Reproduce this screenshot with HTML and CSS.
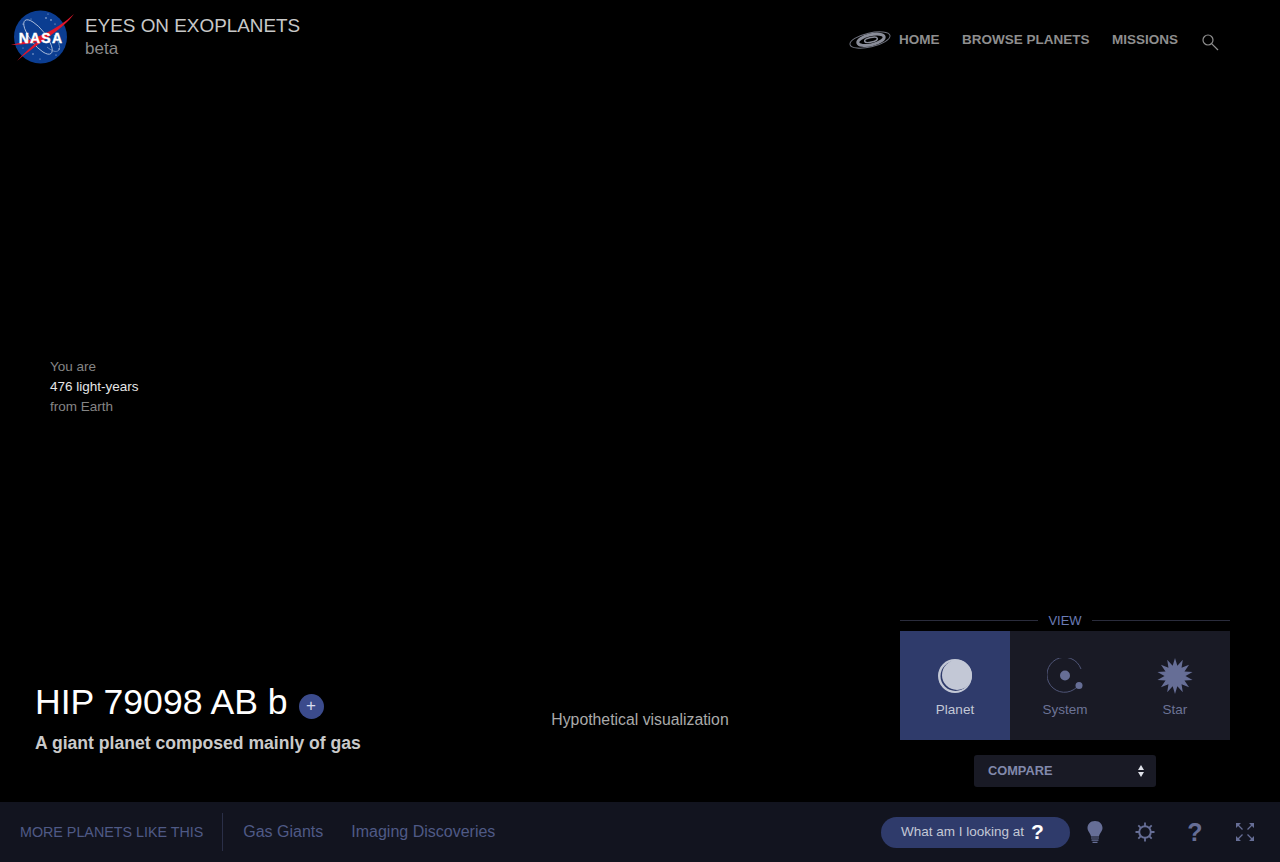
FILE: index.html
```html
<!DOCTYPE html>
<html lang="en">
<head>
<meta charset="utf-8">
<title>Eyes on Exoplanets</title>
<link rel="stylesheet" href="styles.css">
</head>
<body>
<div class="app">
  <header class="top">
    <div class="brand">
      <svg class="nasa" width="70" height="60" viewBox="0 0 70 60" aria-label="NASA">
        <circle cx="31.500" cy="30" r="26.500" fill="#0b3d91"/>
        <g fill="#b9cbe8"><circle cx="37" cy="11" r=".8"/><circle cx="42" cy="13" r=".8"/><circle cx="46" cy="17" r=".6"/><circle cx="14" cy="17" r=".6"/><circle cx="22" cy="12" r=".5"/><circle cx="50" cy="42" r=".7"/><circle cx="47" cy="48" r=".6"/><circle cx="24" cy="47" r=".7"/><circle cx="31" cy="52" r=".6"/><circle cx="14" cy="41" r=".5"/><circle cx="39" cy="7" r=".5"/></g>
        <ellipse cx="29" cy="30" rx="21" ry="7.500" transform="rotate(52 29 30)" fill="none" stroke="#c3d0e6" stroke-width=".8"/>
        <path d="M38 40 C43 44 47 46 50 43 C52 41 49 33 45 28" fill="none" stroke="#8fa6cc" stroke-width=".7"/>
        <path d="M1.700 38 C24 33 47 24 65 7 C54 22 36 31 8 54 C15 46 22 40 28 35 C19 37 10 38 1.700 38 Z" fill="#e0162b"/>
        <text class="nasa-word" x="32" y="36" text-anchor="middle">NASA</text>
      </svg>
      <div class="brand-text">
        <div class="brand-title">EYES ON EXOPLANETS</div>
        <div class="brand-sub">beta</div>
      </div>
    </div>
    <nav class="nav">
      <svg class="galaxy" width="44" height="24" viewBox="0 0 44 24">
        <g transform="rotate(-13 22 12)" fill="none">
          <ellipse cx="22" cy="12" rx="20.500" ry="7" stroke="#6f727e" stroke-width="1"/>
          <ellipse cx="23" cy="12" rx="13.500" ry="5" stroke="#8a8d99" stroke-width="3"/>
          <ellipse cx="23" cy="12" rx="6.500" ry="2.300" stroke="#8a8d99" stroke-width="1.500"/>
        </g>
      </svg>
      <a class="nav-link first">HOME</a>
      <a class="nav-link">BROWSE PLANETS</a>
      <a class="nav-link">MISSIONS</a>
      <svg class="search" width="18" height="18" viewBox="0 0 18 18" fill="none" stroke="#8f8f8f" stroke-width="1.200">
        <circle cx="7" cy="7" r="5"/><path d="M10.600 10.600 L17 17"/>
      </svg>
    </nav>
  </header>

  <main class="stage">
    <div class="distance">
      <div>You are</div>
      <div class="distance-value">476 light-years</div>
      <div>from Earth</div>
    </div>
    <div class="lower">
      <div class="planet">
        <h1 class="planet-name">HIP 79098 AB b<span class="plus">+</span></h1>
        <p class="planet-desc">A giant planet composed mainly of gas</p>
      </div>
      <div class="caption">Hypothetical visualization</div>
      <div class="panel">
        <div class="view-label"><span>VIEW</span></div>
        <div class="tiles">
          <div class="tile active">
            <svg width="36" height="36" viewBox="0 0 36 36">
              <circle cx="18" cy="18" r="17" fill="#c3c8d6"/>
              <circle cx="18.500" cy="18" r="15" fill="#2f3b6b"/>
              <circle cx="20" cy="17" r="15" fill="#c3c8d6"/>
            </svg>
            <span>Planet</span>
          </div>
          <div class="tile">
            <svg width="36" height="36" viewBox="0 0 36 36">
              <path d="M34 11 A17.500 17.500 0 1 0 30 29" fill="none" stroke="#4f5577" stroke-width="1"/>
              <circle cx="18" cy="17.500" r="5" fill="#666e96"/>
              <circle cx="32" cy="27.500" r="3.500" fill="#666e96"/>
            </svg>
            <span>System</span>
          </div>
          <div class="tile">
            <svg width="36" height="36" viewBox="0 0 36 36">
              <polygon fill="#666e96" points="18,0 20.340,7.760 25.810,1.780 24.550,9.790 32.070,6.780 27.460,13.440 35.550,14 28.500,18 35.550,22 27.460,22.560 32.070,29.220 24.550,26.210 25.810,34.220 20.340,28.240 18,36 15.660,28.240 10.190,34.220 11.450,26.210 3.930,29.220 8.540,22.560 0.450,22 7.500,18 0.450,14 8.540,13.440 3.930,6.780 11.450,9.790 10.190,1.780 15.660,7.760"/>
            </svg>
            <span>Star</span>
          </div>
        </div>
        <div class="compare">
          <span>COMPARE</span>
          <span class="arrows"><i class="up"></i><i class="down"></i></span>
        </div>
      </div>
    </div>
  </main>

  <footer class="bar">
    <div class="bar-left">
      <span class="more">MORE PLANETS LIKE THIS</span>
      <span class="sep"></span>
      <a class="tag">Gas Giants</a>
      <a class="tag">Imaging Discoveries</a>
    </div>
    <div class="bar-right">
      <div class="pill">What am I looking at<b>?</b></div>
      <svg class="tool" width="20" height="24" viewBox="0 0 20 24">
        <path d="M10 1 C5 1 2.500 4.500 2.500 8 C2.500 11.500 5.500 13 6 16.500 H14 C14.500 13 17.500 11.500 17.500 8 C17.500 4.500 15 1 10 1 Z" fill="#666e96"/>
        <path d="M6 18 H14 M6.500 20.200 H13.500 M7.500 22.400 H12.500" stroke="#666e96" stroke-width="1.200"/>
      </svg>
      <svg class="tool" width="20" height="20" viewBox="0 0 20 20" fill="none" stroke="#666e96">
        <circle cx="10" cy="10" r="5.800" stroke-width="2"/>
        <path stroke-width="1.800" d="M10 .5 V4 M10 16 V19.500 M.5 10 H4 M16 10 H19.500 M3.300 3.300 L5.800 5.800 M14.200 14.200 L16.700 16.700 M3.300 16.700 L5.800 14.200 M14.200 5.800 L16.700 3.300"/>
      </svg>
      <span class="tool help">?</span>
      <svg class="tool" width="20" height="20" viewBox="0 0 20 20" fill="#666e96" stroke="#666e96">
        <path stroke="none" d="M1 1 H6 L1 6 Z M19 1 H14 L19 6 Z M1 19 H6 L1 14 Z M19 19 H14 L19 14 Z"/>
        <path fill="none" stroke-width="1.300" d="M3 3 L7.500 7.500 M17 3 L12.500 7.500 M3 17 L7.500 12.500 M17 17 L12.500 12.500"/>
      </svg>
    </div>
  </footer>
</div>
</body>
</html>
```
FILE: styles.css
```css
* { box-sizing: border-box; }
html, body { margin: 0; padding: 0; background: #000; }
body { font-family: "Liberation Sans", Arial, sans-serif; }
.app { width: 1280px; height: 862px; display: flex; flex-direction: column; overflow: hidden; }

.top { height: 78px; flex: none; display: flex; justify-content: space-between; align-items: flex-start; }
.brand { display: flex; align-items: flex-start; padding: 7px 0 0 9px; }
.nasa { display: block; flex: none; }
.nasa-word { font: bold 14px "Liberation Sans", Arial, sans-serif; fill: #fff; stroke: #fff; stroke-width: .4px; letter-spacing: 1.200px; }
.brand-text { margin: 8px 0 0 6px; }
.brand-title { font-size: 18.900px; line-height: 22px; color: #c8c8c8; }
.brand-sub { font-size: 17px; line-height: 22px; color: #8c8c8c; margin-top: 1px; }
.nav { display: flex; align-items: center; padding: 28px 61px 0 0; }
.galaxy { display: block; margin-right: 7px; }
.nav-link { font-size: 13.500px; font-weight: bold; color: #8e8e8e; margin-left: 22.500px; line-height: 24px; }
.nav-link.first { margin-left: 0; }
.search { display: block; margin: 3px 0 0 23px; }

.stage { flex: 1; display: flex; flex-direction: column; justify-content: space-between; }
.distance { margin: 279px 0 0 50px; font-size: 13.500px; line-height: 20px; color: #858585; }
.distance-value { color: #e6e6e6; }

.lower { position: relative; padding: 0 50px 15px 35px; display: flex; align-items: flex-end; justify-content: space-between; }
.planet { width: 400px; padding-bottom: 33px; }
.planet-name { margin: 0; font-size: 35.600px; font-weight: normal; line-height: 42px; color: #fff; display: flex; align-items: center; white-space: pre; }
.plus { width: 25px; height: 25px; border-radius: 50%; background: #3b4b8c; color: #d9def0; font-size: 17px; line-height: 24px; text-align: center; margin: 8px 0 0 11px; }
.planet-desc { margin: 9px 0 0; font-size: 17.600px; line-height: 22px; font-weight: bold; color: #cacaca; }
.caption { font-size: 15.800px; line-height: 20px; color: #aaa; width: 180px; text-align: center; margin: 0 0 57px 115px; }

.panel { width: 330px; flex: none; display: flex; flex-direction: column; margin-left: 170px; }
.view-label { display: flex; align-items: center; gap: 10px; color: #6a7bb5; font-size: 13px; line-height: 16px; padding-bottom: 3px; }
.view-label span { position: relative; top: 1px; }
.view-label::before, .view-label::after { content: ""; flex: 1; height: 1px; background: #2a2c3c; }
.tiles { display: flex; background: #191a25; height: 109px; }
.tile { width: 110px; display: flex; flex-direction: column; align-items: center; padding-top: 27px; color: #6c7396; font-size: 13.500px; line-height: 18px; }
.tile svg { display: block; height: 36px; margin-bottom: 7px; }
.tile.active { background: #2f3b6b; color: #c3c8d6; }
.compare { width: 182px; height: 32px; margin: 15px auto 0; background: #191a25; border-radius: 3px; display: flex; align-items: center; justify-content: space-between; padding: 0 12px 2px 14px; color: #8289ab; font-size: 12.800px; font-weight: bold; }
.arrows { display: flex; flex-direction: column; gap: 2px; padding-top: 2px; }
.arrows i { display: block; width: 0; height: 0; border-left: 3.500px solid transparent; border-right: 3.500px solid transparent; }
.arrows .up { border-bottom: 5px solid #e0e2ea; }
.arrows .down { border-top: 5px solid #e0e2ea; }

.bar { height: 60px; flex: none; background: #12141f; display: flex; align-items: center; justify-content: space-between; }
.bar-left { display: flex; align-items: center; padding-left: 20px; }
.more { font-size: 14.300px; color: #4f5a86; }
.sep { width: 1px; height: 38px; background: #2a2f47; margin: 0 20px 0 19px; }
.tag { font-size: 16px; color: #4f5a86; margin-right: 28px; }
.bar-right { display: flex; align-items: center; padding-right: 25px; }
.pill { width: 189px; height: 31px; border-radius: 16px; background: #2f3b6b; color: #c3c8d6; font-size: 13.500px; line-height: 29px; padding-left: 20px; margin-right: 15px; white-space: nowrap; }
.pill b { font-size: 21px; color: #fff; vertical-align: -3px; margin-left: 7px; }
.tool { display: block; flex: none; margin-right: 30px; }
.tool:last-child { margin-right: 0; }
.help { width: 20px; text-align: center; font-size: 25px; font-weight: bold; color: #666e96; line-height: 24px; }
```
